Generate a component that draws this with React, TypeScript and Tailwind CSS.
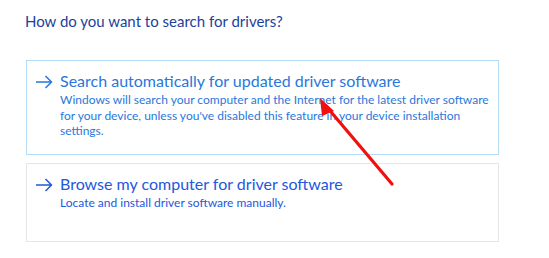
import React from 'react';

const ArrowRight: React.FC<{ className?: string }> = ({ className = '' }) => (
  <svg className={className} width="18" height="14" viewBox="0 0 18 14" fill="none">
    <path d="M1 7h15.5M10.5 1l6 6-6 6" stroke="currentColor" strokeWidth="1.5" />
  </svg>
);

interface OptionProps {
  title: string;
  lines: string[];
  active?: boolean;
}

const Option: React.FC<OptionProps> = ({ title, lines, active = false }) => (
  <div
    className={`w-[473px] border px-2 pt-[9px] pb-[15px] ${
      active ? 'border-[#b6dcf7] min-h-[94px]' : 'border-[#e6e6e6] min-h-[79px]'
    }`}
  >
    <div className={`flex items-start ${active ? 'text-[#2a77dc]' : 'text-[#2457dc]'}`}>
      <ArrowRight className="mt-[5px] mr-[7px] shrink-0" />
      <div className="whitespace-nowrap">
        <div className="text-[16px] leading-[22px]">{title}</div>
        <div className="text-[12px] leading-[15.5px]">
          {lines.map((l) => (
            <div key={l}>{l}</div>
          ))}
        </div>
      </div>
    </div>
  </div>
);

export default function App() {
  return (
    <div className="relative w-[549px] h-[258px] bg-white font-['Lato',sans-serif] overflow-hidden">
      <h1 className="pl-[25px] pt-[10px] text-[15px] leading-[22px] text-[#1c3f9e]">
        How do you want to search for drivers?
      </h1>

      <div className="ml-[26px] mt-[28px] flex flex-col gap-[8px]">
        <Option
          active
          title="Search automatically for updated driver software"
          lines={[
            'Windows will search your computer and the Internet for the latest driver software',
            "for your device, unless you've disabled this feature in your device installation",
            'settings.',
          ]}
        />
        <Option
          title="Browse my computer for driver software"
          lines={['Locate and install driver software manually.']}
        />
      </div>

      {/* red annotation arrow */}
      <svg className="absolute left-0 top-0 pointer-events-none" width="549" height="258">
        <line x1="392" y1="184" x2="326" y2="106" stroke="#f01010" strokeWidth="3.2" strokeLinecap="round" />
        <polygon points="320,98 334,111 322,116" fill="#f01010" />
      </svg>
    </div>
  );
}
